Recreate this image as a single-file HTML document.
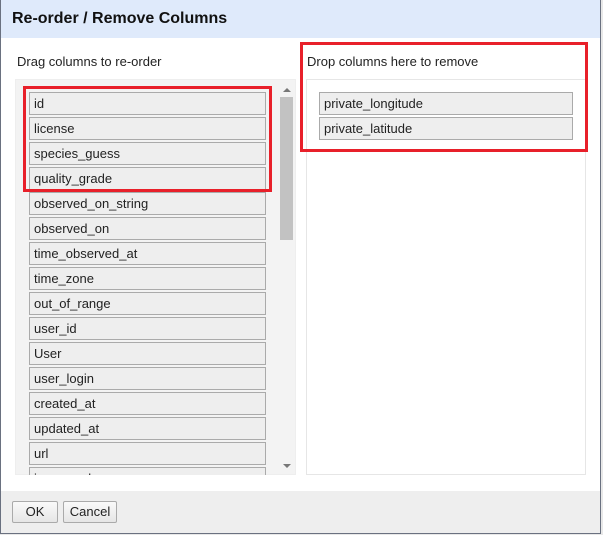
<!DOCTYPE html><html><head><style>
body{margin:0;width:603px;height:535px;background:#e8e8e8;font-family:"Liberation Sans",Arial,sans-serif;font-size:13px;color:#222;position:relative;overflow:hidden}
#dlg{position:absolute;left:0;top:0;width:599px;height:533px;background:#fff;border:1px solid #6a7180;border-top:none}
#title{position:absolute;left:0;top:0;width:599px;height:38px;background:#dfeafb;font-weight:bold;font-size:16px;line-height:38px;text-indent:11px;color:#111}
.lbl{position:absolute;top:54px;font-size:13px}
#lbox{position:absolute;left:14px;top:79px;width:281px;height:396px;background:#f3f3f3;overflow:hidden;border:1px solid #eee;box-sizing:border-box}
#rbox{position:absolute;left:305px;top:79px;width:280px;height:396px;background:#fff;border:1px solid #e6e6e6;box-sizing:border-box}
.it{position:absolute;height:23px;box-sizing:border-box;background:#eee;border:1px solid #aaa;line-height:21px;padding-left:4px;color:#222}
.red{position:absolute;border:3px solid #e8202a;box-sizing:border-box}
#sb{position:absolute;left:279px;top:97px;width:13px;height:143px;background:#c2c2c2}
.ar{position:absolute;left:282px;width:0;height:0;border-left:4px solid transparent;border-right:4px solid transparent}
#foot{position:absolute;left:0;top:491px;width:599px;height:42px;background:#eee}
.btn{position:absolute;top:501px;height:22px;box-sizing:border-box;border:1px solid #aaa;border-radius:2px;background:linear-gradient(#fafafa,#e6e6e6);text-align:center;line-height:20px;font-size:13px}
</style></head><body>
<div id="dlg">
<div id="title">Re-order / Remove Columns</div>
<div class="lbl" style="left:16px">Drag columns to re-order</div>
<div class="lbl" style="left:306px">Drop columns here to remove</div>
<div id="lbox"></div>
<div id="rbox"></div>
<div id="sb"></div>
<div class="ar" style="top:88px;border-bottom:4px solid #777"></div>
<div class="ar" style="top:464px;border-top:4px solid #777"></div>
<div id="items"></div>
<div id="foot"></div>
<div class="btn" style="left:11px;width:46px">OK</div>
<div class="btn" style="left:62px;width:54px">Cancel</div>
</div>
<div style="position:absolute;left:29px;top:92px;width:238px;height:383px;overflow:hidden">
<div class="it" style="left:0;top:0;width:237px">id</div>
<div class="it" style="left:0;top:25px;width:237px">license</div>
<div class="it" style="left:0;top:50px;width:237px">species_guess</div>
<div class="it" style="left:0;top:75px;width:237px">quality_grade</div>
<div class="it" style="left:0;top:100px;width:237px">observed_on_string</div>
<div class="it" style="left:0;top:125px;width:237px">observed_on</div>
<div class="it" style="left:0;top:150px;width:237px">time_observed_at</div>
<div class="it" style="left:0;top:175px;width:237px">time_zone</div>
<div class="it" style="left:0;top:200px;width:237px">out_of_range</div>
<div class="it" style="left:0;top:225px;width:237px">user_id</div>
<div class="it" style="left:0;top:250px;width:237px">User</div>
<div class="it" style="left:0;top:275px;width:237px">user_login</div>
<div class="it" style="left:0;top:300px;width:237px">created_at</div>
<div class="it" style="left:0;top:325px;width:237px">updated_at</div>
<div class="it" style="left:0;top:350px;width:237px">url</div>
<div class="it" style="left:0;top:375px;width:237px">image_url</div>
</div>
<div class="it" style="left:319px;top:92px;width:254px">private_longitude</div>
<div class="it" style="left:319px;top:117px;width:254px">private_latitude</div>
<div class="red" style="left:23px;top:86px;width:249px;height:106px"></div>
<div class="red" style="left:300px;top:42px;width:288px;height:110px"></div>
</body></html>
